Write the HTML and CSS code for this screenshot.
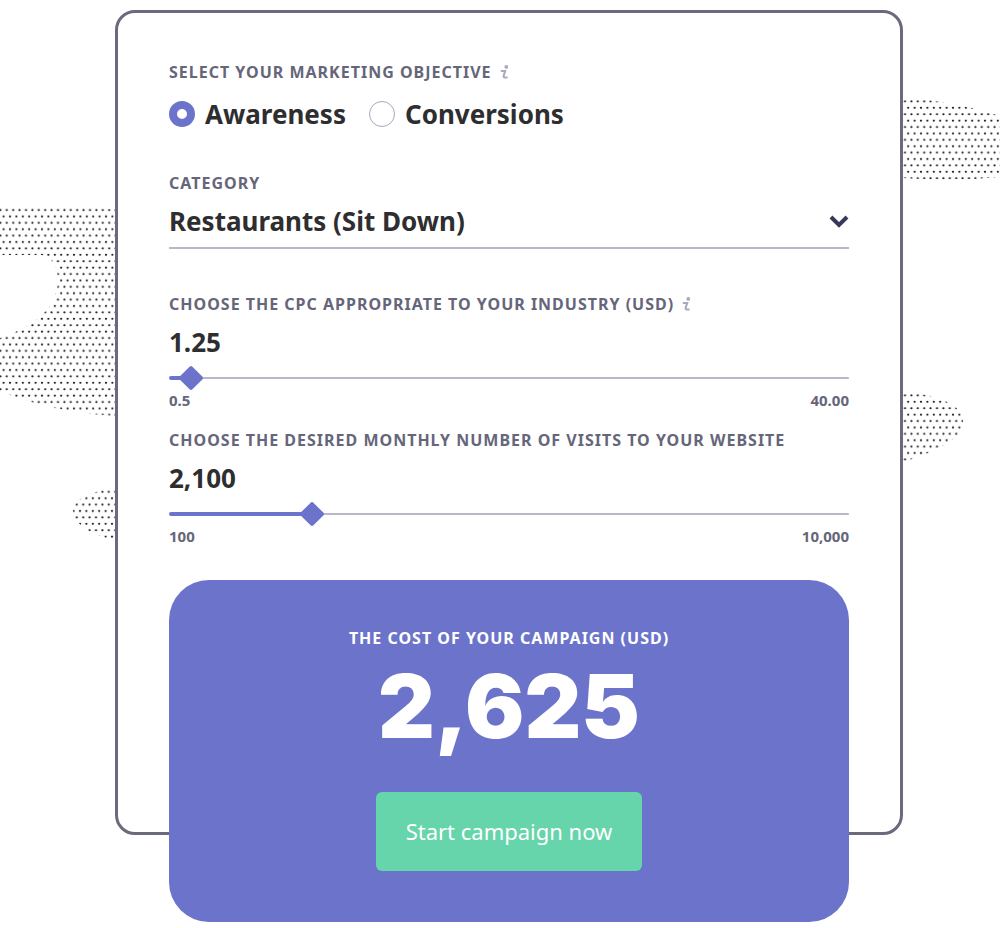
FILE: index.html
```html
<!DOCTYPE html>
<html lang="en">
<head>
<meta charset="utf-8">
<meta name="viewport" content="width=device-width, initial-scale=1">
<title>Campaign cost calculator</title>
<link rel="stylesheet" href="styles.css">
</head>
<body>
<main class="page">
  <form class="card">
    <svg class="dots dots-left" width="115" height="350" viewBox="0 200 115 350" aria-hidden="true">
      <defs>
        <pattern id="dots-a" patternUnits="userSpaceOnUse" x="-2.8" y="206.8" width="6.4" height="12.8">
          <circle cx="3.2" cy="3.2" r="1.1"/><circle cx="0" cy="9.6" r="1.1"/><circle cx="6.4" cy="9.6" r="1.1"/>
        </pattern>
        <pattern id="dots-b" patternUnits="userSpaceOnUse" x="99.2" y="488.6" width="6.4" height="12.8">
          <circle cx="3.2" cy="3.2" r="1.1"/><circle cx="0" cy="9.6" r="1.1"/><circle cx="6.4" cy="9.6" r="1.1"/>
        </pattern>
      </defs>
      <path fill="url(#dots-a)" d="M0 206H40L115 209V416Q50 412 0 391V338Q64 316 57 272Q56 260 42 255H0Z"/>
      <path fill="url(#dots-b)" d="M115 488C88 492 73 500 73 511C73 523 92 536 115 540Z"/>
    </svg>
    <svg class="dots dots-right" width="97" height="380" viewBox="903 90 97 380" aria-hidden="true">
      <defs>
        <pattern id="dots-c" patternUnits="userSpaceOnUse" x="901.8" y="98.2" width="6.4" height="12.8">
          <circle cx="3.2" cy="3.2" r="1.1"/><circle cx="0" cy="9.6" r="1.1"/><circle cx="6.4" cy="9.6" r="1.1"/>
        </pattern>
        <pattern id="dots-d" patternUnits="userSpaceOnUse" x="901.8" y="392.2" width="6.4" height="12.8">
          <circle cx="3.2" cy="3.2" r="1.1"/><circle cx="0" cy="9.6" r="1.1"/><circle cx="6.4" cy="9.6" r="1.1"/>
        </pattern>
      </defs>
      <path fill="url(#dots-c)" d="M903 98Q952 100 1000 116V177Q950 182 903 178Z"/>
      <path fill="url(#dots-d)" d="M903 393C938 393 963 406 963 421C963 438 940 450 903 462Z"/>
    </svg>

    <fieldset class="objective">
      <legend class="label">Select your marketing objective
        <svg class="info" width="9" height="14" viewBox="0 0 9 14" aria-hidden="true"><circle cx="6.3" cy="1.9" r="1.9"/><path d="M0.8 6H5.2L3.7 10.6Q3.2 12.5 4.8 12.5H7.6"/></svg>
      </legend>
      <div class="options">
        <label class="option"><input class="radio" type="radio" name="objective" checked>Awareness</label>
        <label class="option"><input class="radio" type="radio" name="objective">Conversions</label>
      </div>
    </fieldset>

    <div class="category">
      <label class="label" for="category">Category</label>
      <div class="select-wrap">
        <select class="select" id="category"><option>Restaurants (Sit Down)</option></select>
        <svg class="chevron" width="20" height="13" viewBox="0 0 20 13" aria-hidden="true"><path d="M2 2L10 10L18 2"/></svg>
      </div>
    </div>

    <div class="field">
      <label class="label" for="cpc">Choose the CPC appropriate to your industry (USD)
        <svg class="info" width="9" height="14" viewBox="0 0 9 14" aria-hidden="true"><circle cx="6.3" cy="1.9" r="1.9"/><path d="M0.8 6H5.2L3.7 10.6Q3.2 12.5 4.8 12.5H7.6"/></svg>
      </label>
      <output class="value" for="cpc">1.25</output>
      <input class="slider" style="--fill: 3%" id="cpc" type="range" min="0.5" max="40" step="0.25" value="1.25">
      <div class="limits"><span>0.5</span><span>40.00</span></div>
    </div>

    <div class="field">
      <label class="label" for="visits">Choose the desired monthly number of visits to your website</label>
      <output class="value" for="visits">2,100</output>
      <input class="slider" style="--fill: 21%" id="visits" type="range" min="100" max="10000" step="100" value="2100">
      <div class="limits"><span>100</span><span>10,000</span></div>
    </div>

    <section class="result">
      <h2 class="label result-label">The cost of your campaign (USD)</h2>
      <output class="total" for="cpc visits">2,625</output>
      <button class="start" type="button">Start campaign now</button>
    </section>
  </form>
</main>
</body>
</html>
```
FILE: styles.css
```css
* {
  box-sizing: border-box;
}

body {
  margin: 0;
  background: #fff;
  color: #2e2e30;
  font-family: "Noto Sans", "Open Sans", sans-serif;
}

.page {
  padding: 10px 97px 93px 115px;
  overflow: hidden;
}

.card {
  position: relative;
  display: flex;
  flex-direction: column;
  padding: 49px 51px 0;
  border: 3px solid #6a6a7e;
  border-radius: 20px;
}

.dots {
  position: absolute;
  fill: #111;
}

.dots-left {
  top: 187px;
  right: calc(100% + 3px);
}

.dots-right {
  top: 77px;
  left: calc(100% + 3px);
}

.objective {
  min-width: 0;
  margin: 0 0 41px;
  padding: 0;
  border: 0;
}

.label {
  display: flex;
  align-items: center;
  gap: 8px;
  margin: 0;
  padding: 0;
  color: #66667a;
  font-size: 16px;
  font-weight: 700;
  line-height: 20px;
  letter-spacing: 1px;
  text-transform: uppercase;
}

.info {
  flex: none;
  fill: #a9a8bd;
}

.info path {
  fill: none;
  stroke: #a9a8bd;
  stroke-width: 2;
}

.options {
  display: flex;
  flex-wrap: wrap;
  gap: 0 23px;
  margin-top: 14px;
}

.option {
  display: flex;
  align-items: center;
  gap: 10px;
  font-size: 26px;
  font-weight: 700;
  line-height: 36px;
}

.radio {
  width: 26px;
  height: 26px;
  margin: 0;
  border: 1px solid #a9a8bd;
  border-radius: 50%;
  background: #fff;
  appearance: none;
}

.radio:checked {
  border: 8px solid #6b74ca;
}

.category {
  margin-bottom: 45px;
}

.select-wrap {
  position: relative;
  margin-top: 8px;
}

.select {
  display: block;
  width: 100%;
  height: 48px;
  padding: 0 32px 6px 0;
  border: 0;
  border-bottom: 2px solid #b9b8c8;
  border-radius: 0;
  background: transparent;
  color: inherit;
  font: 700 26px/40px "Noto Sans", "Open Sans", sans-serif;
  appearance: none;
}

.chevron {
  position: absolute;
  top: 14px;
  right: 0;
  fill: none;
  stroke: #38385a;
  stroke-width: 4;
  pointer-events: none;
}

.field {
  margin-bottom: 20px;
}

.value {
  display: block;
  margin-top: 10px;
  font-size: 26px;
  font-weight: 700;
  line-height: 36px;
}

.slider {
  display: block;
  width: 100%;
  height: 24px;
  margin: 6px 0 0;
  background: transparent;
  appearance: none;
}

.slider::-webkit-slider-runnable-track {
  height: 4px;
  border-radius: 2px;
  background:
    linear-gradient(#6b74ca, #6b74ca) 0 0 / var(--fill) 4px no-repeat,
    linear-gradient(#b9b8c8, #b9b8c8) 0 1px / 100% 2px no-repeat;
}

.slider::-webkit-slider-thumb {
  width: 18px;
  height: 18px;
  margin-top: -7px;
  border-radius: 2px;
  background: #6b74ca;
  transform: rotate(45deg);
  appearance: none;
}

.limits {
  display: flex;
  justify-content: space-between;
  color: #66667a;
  font-size: 15px;
  font-weight: 700;
  line-height: 20px;
}

.result {
  display: flex;
  flex-direction: column;
  align-items: center;
  margin: 14px 0 -90px;
  padding: 48px 20px 51px;
  border-radius: 40px;
  background: #6b74ca;
  color: #fff;
  z-index: 1;
}

.result-label {
  color: #fff;
}

.total {
  margin-top: 8px;
  font-family: Inter, "Open Sans", sans-serif;
  font-size: 88px;
  font-weight: 900;
  line-height: 100px;
}

.start {
  margin-top: 36px;
  padding: 0 30px;
  border: 0;
  border-radius: 6px;
  background: #67d5ab;
  color: #fff;
  font: 400 22px/79px "Noto Sans", "Open Sans", sans-serif;
}
```
